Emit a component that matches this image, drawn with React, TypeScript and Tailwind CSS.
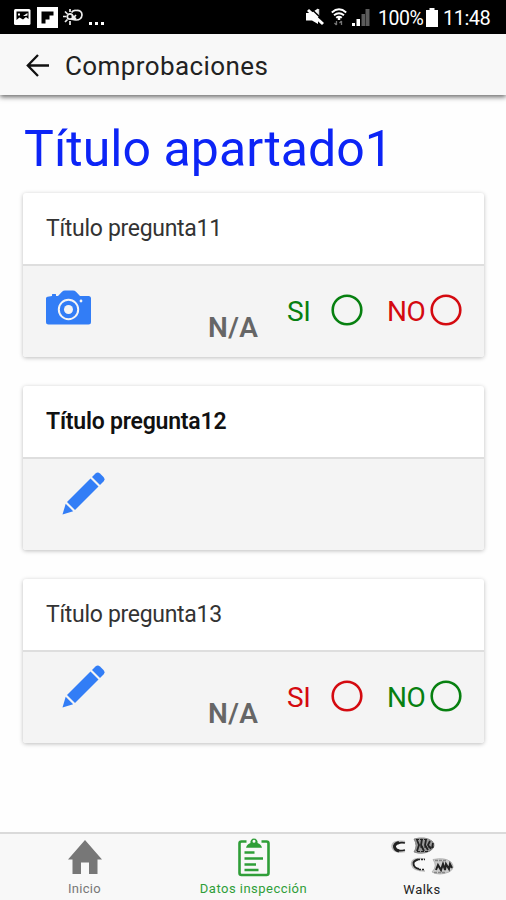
type Question = {
  title: string;
  bold?: boolean;
  icon: "camera" | "pencil";
  yes?: string;
  no?: string;
};

const GREEN = "text-[#078010]";
const RED = "text-[#d40a10]";

const questions: Question[] = [
  { title: "Título pregunta11", icon: "camera", yes: GREEN, no: RED },
  { title: "Título pregunta12", icon: "pencil", bold: true },
  { title: "Título pregunta13", icon: "pencil", yes: RED, no: GREEN },
];

const CameraIcon = () => (
  <svg className="mt-[24px] ml-[23px] h-[35px] w-[45px] shrink-0 text-[#327df6]" viewBox="0 0 45 35" fill="currentColor">
    <path d="M3 6.5 6 6V4.5Q6 4 6.5 4H9.500Q10 4 10 4.500V6H12L16 1.800Q17.300.500 19 .500H27Q28.700.500 30 1.800L34 6H42.500Q45 6 45 8.500V32Q45 34.500 42.500 34.500H2.500Q0 34.500 0 32V8.500Q0 6.500 3 6.500Z" />
    <circle cx="22.500" cy="19.500" r="9.700" fill="none" stroke="#f4f4f4" strokeWidth="2" />
    <circle cx="22.500" cy="19.500" r="4.500" fill="#f4f4f4" />
    <circle cx="35" cy="11" r="1.400" fill="#f4f4f4" />
  </svg>
);

const PencilIcon = () => (
  <svg className="mt-[13px] ml-[39px] h-[43px] w-[43px] shrink-0 text-[#327df6]" viewBox="0 0 43 43" fill="currentColor">
    <path d="M30 5 33.500 1.500Q35.800-.500 38 1.500L41.500 5Q43.500 7.300 41.500 9.500L38 13Z" />
    <path d="M28.500 6.500 36.500 14.500 13 38 5 30Z" />
    <path d="M3.700 31.700 11.200 39.200 .500 42.500Z" />
  </svg>
);

const Radio = () => (
  <svg className="h-8 w-8" viewBox="0 0 32 32" fill="none" stroke="currentColor" strokeWidth="2.600">
    <circle cx="16" cy="16" r="14.300" />
  </svg>
);

const StatusBar = () => (
  <div className="flex h-[34px] items-center bg-black pl-[13px] text-white">
    <svg className="h-[18px] w-[18px]" viewBox="0 0 18 18">
      <rect x="1" y="1" width="16.500" height="16" rx="1.500" fill="#fff" />
      <path d="M3.500 3.500H15.500V11L13 9 10 11.500 6.500 9.500 3.500 12Z" fill="#000" />
      <path d="M5 5.500H7V7.500H5ZM10 8 14.500 5V7.500L12 8Z" fill="#fff" />
    </svg>
    <svg className="ml-[6px] h-[21px] w-[21px]" viewBox="0 0 21 21">
      <path d="M0 0H21V21H0Z" fill="#fff" />
      <path d="M4.500 4.500H16.500V8.500H12.500V12.500H8.500V16.500H4.500Z" fill="#000" />
    </svg>
    <svg className="ml-[5px] h-[18px] w-5" viewBox="0 0 20 18" fill="none" stroke="#eee" strokeWidth="1.700">
      <circle cx="7" cy="8.500" r="2.700" />
      <path d="M7 1V4M2 3.500 4.500 6M0 8.500H3.500M2 14 4.500 11.500M7 13V17" />
      <path d="M8.500 4.500Q10 2 13 2.500 19 2 19 7 18.500 12 13 12 11 12 8.500 10.500M9 7.500 13 11M13 7 8.500 12" />
    </svg>
    <span className="ml-[6px] flex gap-[3px] self-end pb-[9px]">
      <i className="h-[3px] w-[3px] bg-white" />
      <i className="h-[3px] w-[3px] bg-white" />
      <i className="h-[3px] w-[3px] bg-white" />
    </span>
    <svg className="ml-[202px] h-[18px] w-[18px]" viewBox="0 0 18 18" fill="#fff">
      <path d="M0 5H5L12 .500V16L6 12.500H0Z" />
      <path d="M12.500 1V9" stroke="#ddd" strokeWidth="1.500" />
      <path d="M5.500 1 18 13" stroke="#000" strokeWidth="1.500" />
      <path d="M2 2 17 16" stroke="#fff" strokeWidth="3" />
    </svg>
    <svg className="ml-[7px] h-[18px] w-4" viewBox="0 0 16 18" fill="none" stroke="#fff" strokeWidth="1.900">
      <path d="M.800 4.500Q8-1.800 15.200 4.500M3 7.300Q8 3.200 13 7.300M5.200 9.800Q8 7.500 10.800 9.800" />
      <path d="M8 9V12" strokeWidth="2.500" />
      <path d="M5.500 13V17M3.500 15 5.500 17M10.500 17V13M8.500 15 10.500 13" stroke="#777" strokeWidth="1.300" />
    </svg>
    <svg className="ml-[5px] h-[18px] w-[18px]" viewBox="0 0 18 18">
      <path d="M0 15H3V18H0ZM4.500 11H8V18H4.500Z" fill="#fff" />
      <path d="M9.500 6H13V18H9.500ZM13.500 1H17.500V18H13.500Z" fill="#5c5c5c" />
    </svg>
    <span className="ml-[8px] w-[45px] pt-[3px] text-[19.5px] leading-[32px] tracking-[-0.5px] whitespace-nowrap">100%</span>
    <svg className="ml-[3px] h-[19px] w-3" viewBox="0 0 12 19" fill="#fff">
      <path d="M3.500 0H8.500V2H12V19H0V2H3.500Z" />
    </svg>
    <span className="ml-[5px] pt-[2px] text-[20px] leading-[32px] tracking-[-0.5px]">11:48</span>
  </div>
);

const QuestionCard = ({ title, bold, icon, yes, no }: Question) => (
  <section className="h-[164px] overflow-hidden rounded-[3px] bg-white shadow-[0_1px_4px_rgba(0,0,0,0.26)]">
    <h2
      className={
        bold
          ? "h-[71px] pl-[23px] text-[23px] leading-[71px] font-semibold tracking-[-0.22px] text-[#111]"
          : "h-[71px] pl-[23px] text-[23px] leading-[71px] tracking-[-0.3px] text-[#333]"
      }
    >
      {title}
    </h2>
    <div className="flex h-[93px] border-t-2 border-[#dedede] bg-[#f4f4f4]">
      <div className="w-[185px]">{icon === "camera" ? <CameraIcon /> : <PencilIcon />}</div>
      {yes && no && (
        <>
          <span className="w-[79px] pt-[46px] text-[28px] leading-8 font-semibold tracking-[0.4px] text-[#666]">N/A</span>
          <div className={`flex w-[100px] pt-[28px] ${yes}`}>
            <span className="w-[44px] pt-px text-[28px] leading-[34px] tracking-[-0.3px]">SI</span>
            <Radio />
          </div>
          <div className={`flex pt-[28px] ${no}`}>
            <span className="w-[43px] pt-px text-[28px] leading-[34px] tracking-[-0.5px]">NO</span>
            <Radio />
          </div>
        </>
      )}
    </div>
  </section>
);

const TabBar = () => (
  <nav className="flex h-[68px] border-t-2 border-[#dadada] bg-[#f8f8f8] text-[13px] leading-4">
    <div className="flex w-[169px] flex-col items-center pt-[6px] text-[#777]">
      <svg className="h-[35px] w-[34px]" viewBox="0 0 34 35" fill="currentColor">
        <path d="M17 0 34 19.500H29.500V34H21V22.500H13V34H4.500V19.500H0Z" />
      </svg>
      <span className="mt-[6px] tracking-[0.3px]">Inicio</span>
    </div>
    <div className="flex w-[169px] flex-col items-center pt-[3px] text-[#2f9e38]">
      <svg className="h-[40px] w-[32px]" viewBox="0 0 32 40" fill="none" stroke="currentColor" strokeWidth="2.600">
        <path d="M8.500 4.500H3.500Q1.500 4.500 1.500 6.500V36Q1.500 38 3.500 38H28.500Q30.500 38 30.500 36V6.500Q30.500 4.500 28.500 4.500H23.500" />
        <path d="M6.500 15.500H16.500M6.500 21.500H25M6.500 27.500H18M6.500 33H20.500" />
        <path d="M8 10.800Q9 7 12.500 6A3.600 3.600 0 1 1 19.500 6Q23 7 24 10.800ZM16 2.700A1.500 1.500 0 1 0 16 5.700 1.500 1.500 0 1 0 16 2.700Z" fill="currentColor" fillRule="evenodd" stroke="none" />
      </svg>
      <span className="mt-1 tracking-[0.48px] whitespace-nowrap">Datos inspección</span>
    </div>
    <div className="flex w-[168px] flex-col items-center pt-[3px] text-[#222]">
      <svg className="h-[40px] w-[64px]" viewBox="0 0 64 40" fill="none" stroke="currentColor">
        <path d="M15 4.500Q2 3 2 9.500 3 16.500 15 14.500" stroke="#bbb" strokeWidth="1.500" />
        <path d="M9 5.500Q4 7 4.500 10 5 13 9 14" strokeWidth="3" />
        <path d="M8 6.500Q11 5 15 6M8 13.500Q11 14 15 13" strokeWidth="1.800" />
        <path d="M24 2Q35-1 42 4 47 9 40 14 32 18 24 15 28 9 24 2Z" fill="#999" stroke="#777" strokeWidth=".800" />
        <path d="M27 3 29 8 27 14M32 2 31 8 34 14M36 3 35 8 38 13M40 4 38 8 41 12M43 6 42 11" strokeWidth="1.800" />
        <path d="M26 2.500H38M30 10H44M27 14.500H38" strokeWidth="1.200" strokeDasharray="3 1" />
        <path d="M35 22Q22 20 21.500 27 23 34 35 34" stroke="#bbb" strokeWidth="1.500" />
        <path d="M28 22.500Q23 24 23.500 27 24 31 29 32" strokeWidth="2" />
        <path d="M28 22.500H35M29 32.500H35" strokeWidth="1.500" strokeDasharray="2 1" />
        <path d="M43 22.500Q55 20 61 25 66 31 59 35 49 39 42 35 48 29 43 22.500Z" fill="#ccc" stroke="#aaa" strokeWidth=".800" />
        <path d="M46 33 48 28 51 33 53 27 55 33 56 27 59 32 60 27 62 31" strokeWidth="2" />
        <path d="M45 23.500H56M44 35.500H56" stroke="#888" strokeWidth="1.300" strokeDasharray="3 1" />
      </svg>
      <span className="mt-[5px] tracking-[0.5px]">Walks</span>
    </div>
  </nav>
);

function App() {
  return (
    <div className="flex h-[900px] w-[506px] flex-col overflow-hidden bg-[#fefefe] font-[Roboto,sans-serif]">
      <StatusBar />
      <header className="flex h-[61px] items-center bg-[#f8f8f8] pl-[26px] text-[#222] shadow-[0_2px_5px_rgba(0,0,0,0.6)]">
        <svg className="h-[24px] w-[24px]" viewBox="0 0 24 24" fill="none" stroke="#111" strokeWidth="2.300">
          <path d="M23 12.500H2M12 2 1.800 12.500 12 23" />
        </svg>
        <h1 className="ml-[15px] pt-[3px] text-[26px] tracking-[0.4px]">Comprobaciones</h1>
      </header>
      <main className="flex-1 pt-[23px] pr-[22px] pl-[23px]">
        <div className="h-[75px] pl-px text-[50px] leading-[62px] tracking-[0.05px] text-[#0c24f6]">Título apartado1</div>
        <div className="flex flex-col gap-[29px]">
          {questions.map((q) => (
            <QuestionCard key={q.title} {...q} />
          ))}
        </div>
      </main>
      <TabBar />
    </div>
  );
}

export default App;
